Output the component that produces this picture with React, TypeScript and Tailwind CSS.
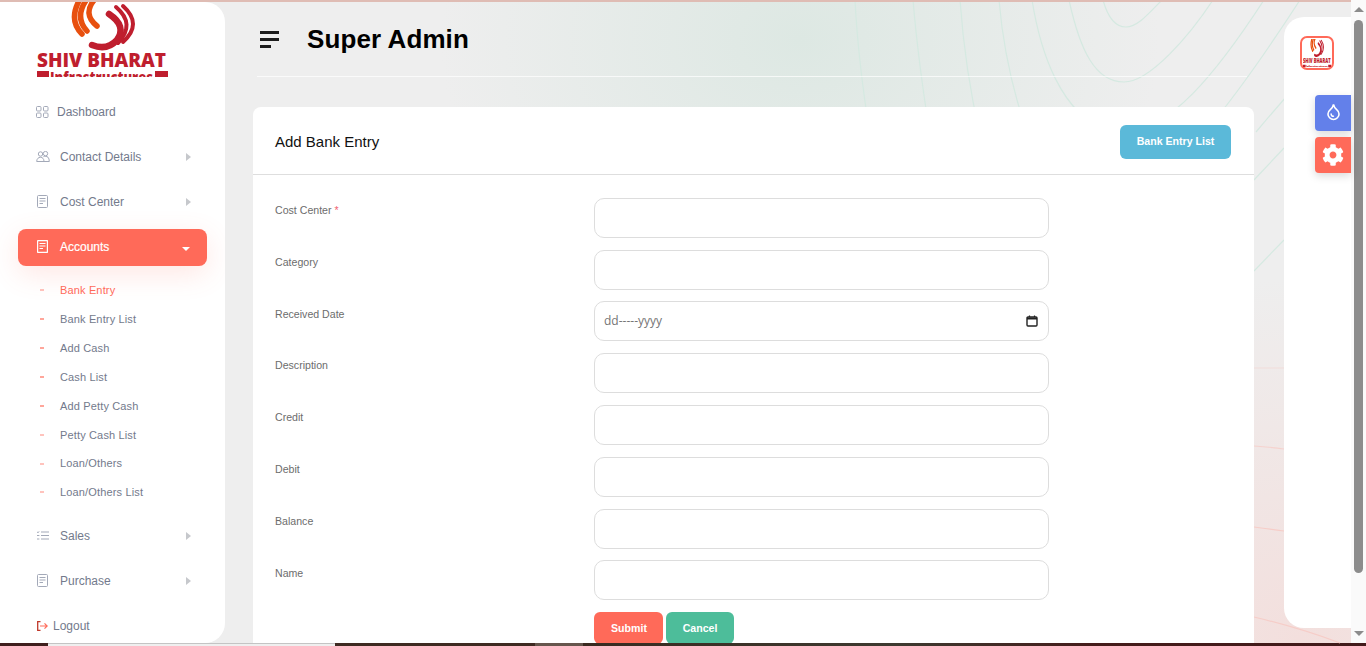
import { FaCog } from "react-icons/fa";

const font = { fontFamily: '"Liberation Sans", Arial, sans-serif' };

function Logo({ className }: { className: string }) {
  return (
    <svg viewBox="0 0 131 75" preserveAspectRatio="none" className={className}>
      <g fill="none" strokeLinecap="round" stroke="#e8500f" strokeWidth="5.5">
        <path d="M43 -3Q31 18 45 32" />
        <path d="M50 -3Q37 15 50 29" />
        <path d="M58 -3Q45 12 60 24" />
      </g>
      <g fill="none" strokeLinecap="round" stroke="#bf1e2e">
        <path d="M86 4Q106 22 86 40" strokeWidth="4" />
        <path d="M79 5Q99 22 81 41" strokeWidth="4" />
        <path d="M72 12Q90 24 80 38Q70 49 55 43" strokeWidth="6.5" />
      </g>
      <text x="0" y="65" textLength="129" lengthAdjust="spacingAndGlyphs" fontSize="19.6" fontWeight="800" fill="#bf1e2e" fontFamily="Open Sans, sans-serif">
        SHIV BHARAT
      </text>
      <rect x="-1" y="69" width="13" height="6" fill="#bf1e2e" />
      <rect x="118" y="69" width="13" height="6" fill="#bf1e2e" />
      <text x="13" y="81" textLength="103" lengthAdjust="spacingAndGlyphs" fontSize="16" fontWeight="800" fill="#bf1e2e" fontFamily="Open Sans, sans-serif">
        Infrastructures
      </text>
    </svg>
  );
}

function GridIcon() {
  return (
    <svg width="13" height="12" viewBox="0 0 13 12" fill="none" stroke="#a3a9b8" className="shrink-0">
      <rect x="0.5" y="0.5" width="4.5" height="4.5" rx="1" />
      <rect x="7.5" y="0.5" width="4.5" height="4.5" rx="1" />
      <rect x="0.5" y="7" width="4.5" height="4.5" rx="1" />
      <rect x="7.5" y="7" width="4.5" height="4.5" rx="1" />
    </svg>
  );
}

function PeopleIcon() {
  return (
    <svg width="14" height="11" viewBox="0 0 14 11" fill="none" stroke="#a3a9b8" className="-ml-[1px] shrink-0">
      <circle cx="4.5" cy="3" r="2.2" />
      <circle cx="9.5" cy="2.6" r="2.2" />
      <path d="M0.7 10.5C0.7 7.8 2.4 6.3 4.5 6.3S8 7.8 8 10.5Z" />
      <path d="M7.4 5.7C8.6 5.2 10.8 5.2 12 6.2C12.9 7.2 13.3 8.6 13.3 10.5H8" />
    </svg>
  );
}

function DocIcon({ light }: { light?: boolean }) {
  const color = light ? "#ffffff" : "#a3a9b8";
  return (
    <svg width="11" height="13" viewBox="0 0 11 13" fill="none" stroke={color} className="shrink-0">
      <rect x="0.5" y="0.5" width="10" height="12" rx="1" strokeWidth={light ? 1.4 : 1} />
      <path d="M2.5 3.5H8.5M2.5 6H8.5M2.5 8.5H6" />
    </svg>
  );
}

function ListIcon() {
  return (
    <svg width="12" height="9" viewBox="0 0 12 9" fill="none" stroke="#a3a9b8" className="shrink-0">
      <path d="M4 1H12M4 4.5H12M4 8H12" />
      <path d="M0 1L1 1.6L2.4 0.4M0 4.5H2.4M0 8H2.4" />
    </svg>
  );
}

function CaretRight() {
  return <span className="ml-auto mr-[16px] h-0 w-0 border-y-[4px] border-l-[5px] border-y-transparent border-l-[#c6c8cc]" />;
}

function NavRow({ icon, label, gap }: { icon: React.ReactNode; label: string; gap: string }) {
  return (
    <div className="flex h-[45px] items-center pl-[37px] pr-[18px] text-[12px] text-[#737a8c]">
      {icon}
      <span className={gap}>{label}</span>
      <CaretRight />
    </div>
  );
}

const subItems = [
  { label: "Bank Entry", active: true, dash: "bg-[#ff6a59]/40", row: "h-[29px]" },
  { label: "Bank Entry List", dash: "bg-[#ff6a59]/60", row: "h-[29px]" },
  { label: "Add Cash", dash: "bg-[#ff6a59]/60", row: "h-[29px]" },
  { label: "Cash List", dash: "bg-[#ff6a59]/60", row: "h-[29px]" },
  { label: "Add Petty Cash", dash: "bg-[#ff6a59]/60", row: "h-[29px]" },
  { label: "Petty Cash List", dash: "bg-[#ff6a59]/40", row: "h-[29px]" },
  { label: "Loan/Others", dash: "bg-[#ff6a59]/40", row: "h-[28px]" },
  { label: "Loan/Others List", dash: "bg-[#ff6a59]/40", row: "h-[29px]" },
];

function Sidebar() {
  return (
    <aside className="h-full w-[225px] shrink-0 overflow-hidden rounded-r-[20px] bg-white">
      <div className="h-[75px] pl-[37px]">
        <Logo className="h-[75px] w-[131px] overflow-hidden" />
      </div>
      <nav className="mt-[12px]">
        <div className="flex h-[45px] items-center pl-[36px] text-[12px] text-[#737a8c]">
          <GridIcon />
          <span className="ml-[8px]">Dashboard</span>
        </div>
        <NavRow icon={<PeopleIcon />} label="Contact Details" gap="ml-[10px]" />
        <NavRow icon={<DocIcon />} label="Cost Center" gap="ml-[12px]" />
        <div className="mx-[18px] mt-[5px] flex h-[37px] items-center rounded-[8px] bg-[#ff6a59] pb-[2px] pl-[19px] pr-[17px] text-[12px] text-white shadow-[0_8px_28px_rgba(255,106,89,0.16)]">
          <DocIcon light />
          <span className="ml-[12px] [-webkit-text-stroke:0.2px_white]">Accounts</span>
          <span className="ml-auto mt-[5px] h-0 w-0 border-x-[4px] border-t-[4px] border-x-transparent border-t-white" />
        </div>
        <ul className="mb-[6.9px] mt-[9.5px]">
          {subItems.map((item) => (
            <li key={item.label} className={`flex items-center pl-[40px] text-[11px] tracking-[0.15px] ${item.row}`}>
              <span className={`h-[2px] w-[4px] ${item.dash}`} />
              <span className={`ml-[16px] ${item.active ? "text-[#ff6a59]" : "text-[#737a8c]"}`}>{item.label}</span>
            </li>
          ))}
        </ul>
        <NavRow icon={<ListIcon />} label="Sales" gap="ml-[11px]" />
        <NavRow icon={<DocIcon />} label="Purchase" gap="ml-[12px]" />
        <div className="flex h-[45px] items-center pl-[37px] text-[12px] text-[#737a8c]">
          <svg width="11" height="10" viewBox="0 0 11 10" fill="none" className="shrink-0">
            <path d="M3.5 0.7H0.7V9.3H3.5" stroke="#c0392b" strokeWidth="1.3" />
            <path d="M3 5H10M7.5 2.4L10.2 5L7.5 7.6" stroke="#ff6a59" strokeWidth="1.2" />
          </svg>
          <span className="ml-[5px]">Logout</span>
        </div>
      </nav>
    </aside>
  );
}

const fields = ["Cost Center", "Category", "Received Date", "Description", "Credit", "Debit", "Balance", "Name"];

function FormField({ label }: { label: string }) {
  return (
    <div className="mb-[11.8px] flex">
      <label className="w-[319px] shrink-0 pt-[6.2px] text-[10.6px] leading-[13px] text-[#6c6c6c]">
        {label}
        {label === "Cost Center" && <span className="text-[#f0616f]"> *</span>}
      </label>
      {label === "Received Date" ? (
        <div className="flex h-10 w-[455px] items-center justify-between rounded-[10px] border border-[#dddddd] bg-white pl-[9px] pr-[10px]">
          <span className="text-[12px] text-[#757575]" style={{ fontFamily: '"Open Sans", sans-serif' }}>dd-----yyyy</span>
          <svg width="12" height="12" viewBox="0 0 12 12" fill="none" stroke="#222222">
            <rect x="1" y="2" width="10" height="9" rx="1" strokeWidth="1.4" />
            <path d="M1 3.5H11" strokeWidth="2" />
            <path d="M3.5 0.5V2M8.5 0.5V2" strokeWidth="1.2" />
          </svg>
        </div>
      ) : (
        <input className="h-10 w-[455px] rounded-[10px] border border-[#dddddd] bg-white outline-none" />
      )}
    </div>
  );
}

function ContourLines() {
  return (
    <svg width="1351" height="646" viewBox="0 0 1351 646" fill="none" className="absolute left-0 top-0">
      <g stroke="#d5e9e1" strokeWidth="1.2">
        <path d="M855 0Q858 60 870 135" />
        <path d="M913 0Q918 60 930 135" />
        <path d="M960 0Q965 70 980 135" />
        <path d="M999 0Q1005 70 1028 135" />
        <path d="M1032 0C1040 50 1060 115 1110 132C1165 145 1225 60 1264 0" />
        <path d="M1069 0C1080 50 1095 82 1124 82C1150 82 1190 35 1213 0" />
        <path d="M1103 0C1108 18 1115 27 1126 27C1138 27 1150 12 1162 0" />
        <path d="M1205 132Q1245 85 1300 0" />
        <path d="M1256 132Q1300 80 1345 30" />
        <path d="M1254 180L1284 148" />
        <path d="M1254 271L1284 240" />
      </g>
      <g stroke="#f6cdc8" strokeWidth="1.2">
        <path d="M1254 368L1284 368" opacity="0.4" />
        <path d="M1254 446Q1270 447 1284 449" opacity="0.8" />
        <path d="M1254 527Q1270 529 1284 531" />
        <path d="M1254 617Q1300 628 1340 643" />
      </g>
    </svg>
  );
}

function MainContent() {
  return (
    <main className="relative min-w-0 flex-1 overflow-hidden pl-[28px] pr-[30px]">
      <header className="mb-[30px] ml-[4px] mr-[7px] flex h-[75px] items-center border-b border-white/70">
        <button className="ml-[3px] flex w-[19px] flex-col gap-[4px]">
          <span className="h-[3px] w-full bg-[#1c1c1c]" />
          <span className="h-[3px] w-full bg-[#1c1c1c]" />
          <span className="h-[3px] w-[11px] bg-[#1c1c1c]" />
        </button>
        <h1 className="ml-[28px] text-[26px] font-bold tracking-[0.1px] text-black">Super Admin</h1>
      </header>
      <section className="rounded-[8px] bg-white">
        <div className="flex h-[68px] items-center justify-between border-b border-[#dedede] pl-[22px] pr-[23px]">
          <h2 className="mt-[4px] text-[15px] text-[#111111]">Add Bank Entry</h2>
          <button className="mt-[2px] h-[34px] w-[111px] rounded-[6px] bg-[#5bb9d9] text-[10.6px] font-bold text-white">Bank Entry List</button>
        </div>
        <form className="pl-[22px] pt-[22.8px]">
          {fields.map((f) => (
            <FormField key={f} label={f} />
          ))}
          <div className="ml-[319px] flex gap-[3px] pb-[20px]">
            <button className="h-[32px] w-[69px] rounded-[6px] bg-[#ff6a59] pl-[1px] pt-[1px] text-[10.6px] font-bold text-white">Submit</button>
            <button className="h-[32px] w-[68px] rounded-[6px] bg-[#4dbd9a] pt-[1px] text-[10.6px] font-bold text-white">Cancel</button>
          </div>
        </form>
      </section>
    </main>
  );
}

function RightPanel() {
  return (
    <aside className="relative my-[15px] w-[67px] shrink-0 rounded-l-[20px] bg-white pt-[19px]">
      <div className="ml-[16px] flex h-[34px] w-[34px] items-center justify-center rounded-[7px] border-2 border-[#ff6a59] bg-white">
        <Logo className="h-[28px] w-[28px] overflow-hidden" />
      </div>
      <div className="ml-auto mt-[25px] flex h-[36px] w-[36px] items-center justify-center rounded-l-[4px] bg-[#6380ea] pb-[3px] shadow-[0_3px_8px_rgba(0,0,0,0.15)]">
        <svg width="19" height="19" viewBox="0 0 24 24" fill="none" stroke="white" strokeWidth="2" strokeLinecap="round">
          <path d="M12 22a7 7 0 0 0 7-7c0-2-1-3.9-3-5.5s-3.5-4-4-6.5c-.5 2.5-2 4.9-4 6.5C6 11.1 5 13 5 15a7 7 0 0 0 7 7z" />
          <path d="M9 15a3 3 0 0 0 3 3" strokeWidth="1.8" />
        </svg>
      </div>
      <div className="ml-auto mt-[6px] flex h-[36px] w-[36px] items-center justify-center rounded-l-[4px] bg-[#ff6a59] shadow-[0_3px_8px_rgba(0,0,0,0.15)]">
        <FaCog size={22} color="white" />
      </div>
    </aside>
  );
}

function Scrollbar() {
  return (
    <div className="flex h-full w-[15px] shrink-0 flex-col items-center bg-[#fafafa]">
      <span className="mt-[7px] h-0 w-0 border-x-[5px] border-b-[5px] border-x-transparent border-b-[#8c8c8c]" />
      <span className="mt-[8px] h-[553px] w-[9px] rounded-full bg-[#8c8c8c]" />
      <span className="mb-[7px] mt-auto h-0 w-0 border-x-[5px] border-t-[5px] border-x-transparent border-t-[#8c8c8c]" />
    </div>
  );
}

export default function App() {
  return (
    <div className="flex h-screen flex-col overflow-hidden" style={font}>
      <div className="flex min-h-0 flex-1">
        <div className="relative flex min-w-0 flex-1 flex-col bg-[radial-gradient(ellipse_360px_280px_at_800px_40px,#dde8e3,transparent),radial-gradient(ellipse_420px_360px_at_1300px_640px,#f3dfdd,transparent),linear-gradient(#eeeeee,#eeeeee)]">
          <ContourLines />
          <div className="relative h-[2px] shrink-0 bg-[#dfbcb4]" />
          <div className="relative flex min-h-0 flex-1">
            <Sidebar />
            <MainContent />
            <RightPanel />
          </div>
        </div>
        <Scrollbar />
      </div>
      <div className="flex h-[3px] shrink-0">
        <span className="w-[48px] bg-[#3f1f1d]" />
        <span className="w-[287px] border-t border-[#c4c4c4] bg-[#efefef]" />
        <span className="w-[200px] bg-[#3e2a22]" />
        <span className="w-[48px] bg-[#66564d]" />
        <span className="flex-1 bg-[linear-gradient(90deg,#3a2a20,#3d3a30_40%,#451c1b_65%,#421a1a)]" />
      </div>
    </div>
  );
}
